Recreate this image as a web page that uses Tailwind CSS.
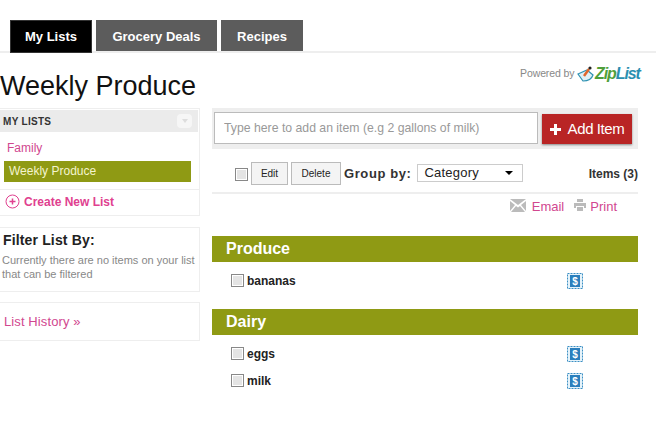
<!DOCTYPE html>
<html lang="en">
<head>
    <meta charset="UTF-8">
    <title>Weekly Produce</title>
    <script src="https://cdn.jsdelivr.net/npm/@tailwindcss/browser@4"></script>
</head>
<body class="bg-white h-[434px] overflow-hidden font-['Liberation_Sans',Arial,sans-serif] text-[#222]">
    <!-- Tabs -->
    <div class="h-[53px] pt-5 pl-2.5 flex items-start gap-1 border-b-2 border-[#eee]">
        <a class="w-[82px] h-[33px] pt-px bg-black border border-[#333] text-white font-bold text-[13px] flex items-center justify-center">My Lists</a>
        <a class="w-[121px] h-[31px] pt-[3px] bg-[#5c5c5c] text-white font-bold text-[13px] flex items-center justify-center">Grocery Deals</a>
        <a class="w-[82px] h-[31px] pt-[3px] bg-[#5c5c5c] text-white font-bold text-[13px] flex items-center justify-center">Recipes</a>
    </div>

    <!-- Title row -->
    <div class="h-[55px] relative">
        <h1 class="pt-[17px] text-[27px] leading-[32px] text-[#111]">Weekly Produce</h1>
        <div class="absolute left-[520px] top-[12px] flex items-center">
            <span class="w-[55px] text-[10.500px] tracking-[-0.1px] text-[#888] whitespace-nowrap">Powered by</span>
            <svg class="ml-[2px]" width="18" height="18" viewBox="0 0 18 18">
                <path d="M1 9 L10 5 L16 10 Q14 16 6 16 Z" fill="#dff0f5" stroke="#2f93b3" stroke-width="1.2"/>
                <path d="M7 11 L12 4" stroke="#e0672c" stroke-width="2.5"/>
                <circle cx="13" cy="3" r="1.6" fill="#222"/>
            </svg>
            <span class="text-[16px] leading-none font-bold italic tracking-[-1.1px]"><span class="text-[#4f9f3a]">Zip</span><span class="text-[#2a8fb0]">List</span></span>
        </div>
    </div>

    <div class="flex items-start">
        <!-- Sidebar -->
        <aside class="w-[200px] shrink-0">
            <div class="h-[108px] border border-l-0 border-[#eee] pt-px">
                <div class="h-[22px] mr-px bg-[#ebebeb] flex items-center justify-between pl-[3px] pr-[6px]">
                    <span class="text-[10px] font-bold tracking-[0.3px] text-[#333]">MY LISTS</span>
                    <span class="w-[15px] h-[14px] bg-[#f6f6f6] rounded-sm flex items-center justify-center">
                        <span class="border-x-[3px] border-t-[4px] border-x-transparent border-t-[#ddd]"></span>
                    </span>
                </div>
                <div class="pl-[7px] pt-[8px] h-[21px] box-content text-xs text-[#d1478f] leading-[16px]">Family</div>
                <div class="ml-1 mr-2 h-[21px] bg-[#8f9a14] text-[#f4f4cf] text-xs leading-[21px] pl-[5px]">Weekly Produce</div>
                <div class="mt-[7px] border-t border-[#eee] pl-[5px] h-[24px] flex items-center gap-1 text-xs font-bold text-[#e0408f]">
                    <svg width="15" height="15" viewBox="0 0 15 15" fill="none" stroke="#e0408f">
                        <circle cx="7.500" cy="7.500" r="6.500"/>
                        <path d="M4.500 7.500h6M7.500 4.500v6" stroke-width="1.500"/>
                    </svg>
                    Create New List
                </div>
            </div>
            <div class="mt-[11px] h-[65px] border border-l-0 border-[#eee] pl-[3px] pt-[2px]">
                <div class="text-sm font-bold leading-5 tracking-[0.15px] text-[#222]">Filter List By:</div>
                <p class="mt-[3px] text-[11px] leading-[14px] text-[#888] -ml-px whitespace-nowrap">Currently there are no items on your list<br>that can be filtered</p>
            </div>
            <div class="mt-[10px] h-[39px] border border-l-0 border-[#eee] pl-[4px] flex items-center text-[13px] tracking-[0.1px] text-[#d1478f]">List History »</div>
        </aside>

        <!-- Main -->
        <main class="ml-3 w-[426px]">
            <div class="h-[41px] bg-[#eee] flex items-start pl-0.5 pt-1 gap-1">
                <input class="w-[324px] h-8 bg-white border border-[#bbb] px-[9px] text-[12.250px] placeholder:text-[#999] outline-none" placeholder="Type here to add an item (e.g 2 gallons of milk)">
                <button class="w-[90px] h-[30px] mt-0.5 bg-[#b92525] text-white text-[15px] tracking-[-0.4px] flex items-center justify-center gap-[7px] shadow-[0_1px_2px_#888]">
                    <svg width="11" height="11" viewBox="0 0 11 11"><path d="M4 0h3v4h4v3H7v4H4V7H0V4h4z" fill="#fff"/></svg>
                    Add Item
                </button>
            </div>

            <!-- Toolbar -->
            <div class="mt-[13px] h-[32px] border-b-2 border-[#eee] flex items-start pl-[23px] relative">
                <span class="mt-[6px] w-[13px] h-[13px] border border-[#888] bg-[#e4e4e4] shadow-[inset_0_0_0_1px_#fff]"></span>
                <button class="ml-[3px] w-[37px] h-[23px] bg-[#f4f4f4] border border-[#bbb] text-[10px] text-[#222]">Edit</button>
                <button class="ml-[3px] w-[50px] h-[23px] bg-[#f4f4f4] border border-[#bbb] text-[10px] text-[#222]">Delete</button>
                <span class="ml-[3px] text-[13px] leading-[23px] font-bold text-[#333] tracking-[0.6px]">Group by:</span>
                <div class="ml-[5px] mt-0.5 w-[106px] h-[18px] border border-[#ccc] bg-white flex items-center justify-between pl-[7px] pr-[9px] text-[13px] tracking-[0.2px] text-[#222]">
                    Category
                    <span class="border-x-[4px] border-t-[4px] border-x-transparent border-t-black"></span>
                </div>
                <span class="ml-auto mt-[5px] text-xs leading-[14px] font-bold text-[#333]">Items (3)</span>
            </div>

            <!-- Email / print -->
            <div class="h-[42px] pt-[5px] pr-[21px] flex items-start justify-end text-[13px] text-[#d1478f]">
                <svg width="16" height="13" viewBox="0 0 16 13"><path d="M0 0l8 6 8-6zM0 2v10l5-6zM16 2v10l-5-6zM1 13h14L10 7l-2 1.500L6 7z" fill="#bbb"/></svg>
                <span class="ml-1.5 leading-[16px]">Email</span>
                <svg class="ml-[10px]" width="12" height="12" viewBox="0 0 12 12"><path d="M3 0h6v3H3zM0 4h12v5h-2V7H2v2H0zM3 8h6v4H3z" fill="#bbb"/></svg>
                <span class="ml-[4px] leading-[16px]">Print</span>
            </div>

            <!-- Produce -->
            <div class="h-[26px] bg-[#8f9a14] text-white font-bold text-base leading-[26px] pl-3.5">Produce</div>
            <div class="h-[47px] pt-[5px]">
                <div class="h-[27px] flex items-center pl-[19px]">
                    <span class="w-[13px] h-[13px] border border-[#888] bg-[#e4e4e4] shadow-[inset_0_0_0_1px_#fff]"></span>
                    <span class="ml-[3px] text-xs font-bold text-[#222]">bananas</span>
                    <svg class="ml-auto mr-[55px]" width="16" height="16" viewBox="0 0 16 16">
                        <rect x="0.500" y="0.500" width="15" height="15" fill="#e6f3fa" stroke="#3b8fc4" stroke-dasharray="2 1"/>
                        <rect x="3" y="2" width="10" height="12" fill="#2b7fbd"/>
                        <text x="8" y="12" text-anchor="middle" font-size="10" font-weight="700" fill="#fff" font-family="Liberation Sans">$</text>
                    </svg>
                </div>
            </div>

            <!-- Dairy -->
            <div class="h-[26px] bg-[#8f9a14] text-white font-bold text-base leading-[26px] pl-3.5">Dairy</div>
            <div class="pt-[5px]">
                <div class="h-[27px] flex items-center pl-[19px]">
                    <span class="w-[13px] h-[13px] border border-[#888] bg-[#e4e4e4] shadow-[inset_0_0_0_1px_#fff]"></span>
                    <span class="ml-[3px] text-xs font-bold text-[#222]">eggs</span>
                    <svg class="ml-auto mr-[55px]" width="16" height="16" viewBox="0 0 16 16">
                        <rect x="0.500" y="0.500" width="15" height="15" fill="#e6f3fa" stroke="#3b8fc4" stroke-dasharray="2 1"/>
                        <rect x="3" y="2" width="10" height="12" fill="#2b7fbd"/>
                        <text x="8" y="12" text-anchor="middle" font-size="10" font-weight="700" fill="#fff" font-family="Liberation Sans">$</text>
                    </svg>
                </div>
                <div class="h-[27px] flex items-center pl-[19px]">
                    <span class="w-[13px] h-[13px] border border-[#888] bg-[#e4e4e4] shadow-[inset_0_0_0_1px_#fff]"></span>
                    <span class="ml-[3px] text-xs font-bold text-[#222]">milk</span>
                    <svg class="ml-auto mr-[55px]" width="16" height="16" viewBox="0 0 16 16">
                        <rect x="0.500" y="0.500" width="15" height="15" fill="#e6f3fa" stroke="#3b8fc4" stroke-dasharray="2 1"/>
                        <rect x="3" y="2" width="10" height="12" fill="#2b7fbd"/>
                        <text x="8" y="12" text-anchor="middle" font-size="10" font-weight="700" fill="#fff" font-family="Liberation Sans">$</text>
                    </svg>
                </div>
            </div>
        </main>
    </div>
</body>
</html>
